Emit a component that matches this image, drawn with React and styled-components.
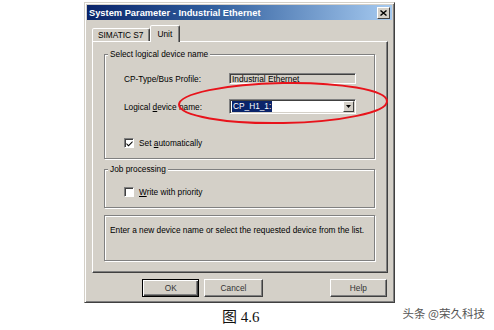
import React from 'react';
import styled, { createGlobalStyle } from 'styled-components';

const GlobalStyle = createGlobalStyle`
  html, body {
    margin: 0;
    background: #ffffff;
  }
`;

const face = '#d4d0c8';
const uiFont = `"Liberation Sans", Arial, sans-serif`;

const Page = styled.div`
  position: relative;
  width: 494px;
  height: 330px;
  overflow: hidden;
  background: #fff;
  font-family: ${uiFont};
  font-size: 8.3px;
  color: #000;
`;

const Window = styled.div`
  box-sizing: border-box;
  margin: 2px 0 0 84px;
  width: 311px;
  height: 301px;
  background: ${face};
  border: 1px solid;
  border-color: ${face} #404040 #404040 ${face};
  box-shadow: inset 1px 1px 0 #fff, inset -1px -1px 0 #808080;
  padding: 2px;
  display: flex;
  flex-direction: column;
`;

const TitleBar = styled.div`
  height: 15px;
  display: flex;
  align-items: center;
  padding: 0 2px;
  background: linear-gradient(90deg, #0a246a 0%, #2f5d9c 40%, #a6caf0 100%);
  color: #fff;
  font-weight: bold;
  font-size: 9.3px;
`;

const TitleText = styled.span`
  flex: 1;
  white-space: nowrap;
`;

const CloseButton = styled.div`
  box-sizing: border-box;
  width: 13px;
  height: 12px;
  background: ${face};
  border: 1px solid;
  border-color: #fff #404040 #404040 #fff;
  display: flex;
  align-items: center;
  justify-content: center;
`;

const Body = styled.div`
  flex: 1;
  display: flex;
  flex-direction: column;
  padding: 6px 4px 0 5px;
`;

const TabStrip = styled.div`
  display: flex;
  align-items: flex-end;
  height: 16px;
  position: relative;
  z-index: 1;
  margin-bottom: -1px;
`;

const Tab = styled.div`
  box-sizing: border-box;
  height: ${p => (p.$active ? '17px' : '13px')};
  margin-bottom: ${p => (p.$active ? '0' : '1px')};
  padding: 0 ${p => (p.$active ? '7px' : '5px')};
  display: flex;
  align-items: center;
  background: ${face};
  border: 1px solid;
  border-bottom: none;
  border-color: #fff #404040 transparent #fff;
  box-shadow: inset -1px 0 0 #808080;
  border-radius: 2px 2px 0 0;
  white-space: nowrap;
`;

const Panel = styled.div`
  box-sizing: border-box;
  height: 232px;
  border: 1px solid;
  border-color: #fff #404040 #404040 #fff;
  box-shadow: inset -1px -1px 0 #808080;
  padding: 7px 12px 0 11px;
  display: flex;
  flex-direction: column;
`;

const Group = styled.fieldset`
  margin: 0 0 ${p => p.$gap || 0}px 0;
  padding: ${p => p.$pad};
  border: 1px solid #808080;
  box-shadow: inset 1px 1px 0 #fff, 1px 1px 0 #fff;
  min-width: 0;
`;

const Legend = styled.legend`
  padding: 0 2px;
  margin-left: -16px;
  line-height: 10px;
  background: ${face};
`;

const InfoBox = styled.div`
  box-sizing: border-box;
  height: 46px;
  border: 1px solid #808080;
  box-shadow: inset 1px 1px 0 #fff, 1px 1px 0 #fff;
  padding: 9px 5px;
  line-height: 10px;
  white-space: nowrap;
`;

const FieldRow = styled.div`
  display: grid;
  grid-template-columns: 105px 127px;
  align-items: center;
  height: ${p => p.$h}px;
  margin-top: ${p => p.$mt || 0}px;
`;

const TextBox = styled.div`
  box-sizing: border-box;
  height: ${p => p.$h}px;
  border: 1px solid;
  border-color: #808080 #fff #fff #808080;
  box-shadow: inset 1px 1px 0 #404040, inset -1px -1px 0 ${face};
  background: ${p => (p.$disabled ? face : '#fff')};
  display: flex;
  align-items: center;
  padding: 0 2px 0 2px;
  white-space: nowrap;
  overflow: hidden;
`;

const Selected = styled.span`
  background: #0a246a;
  color: #fff;
  padding: 0 1px;
  line-height: 11px;
`;

const DropButton = styled.div`
  box-sizing: border-box;
  margin-left: auto;
  width: 11px;
  height: 11px;
  margin-right: -1px;
  background: ${face};
  border: 1px solid;
  border-color: #fff #404040 #404040 #fff;
  display: flex;
  align-items: center;
  justify-content: center;
`;

const CheckRow = styled.label`
  display: flex;
  align-items: center;
  gap: 5px;
  height: 10px;
  margin-top: ${p => p.$mt || 0}px;
`;

const Box = styled.span`
  box-sizing: border-box;
  width: 10px;
  height: 10px;
  background: #fff;
  border: 1px solid;
  border-color: #808080 #fff #fff #808080;
  box-shadow: inset 1px 1px 0 #404040;
  display: flex;
  align-items: center;
  justify-content: center;
`;

const Key = styled.span`
  text-decoration: underline;
`;

const ButtonRow = styled.div`
  display: flex;
  padding: 6px 1px 0 0;
`;

const Button = styled.div`
  box-sizing: border-box;
  width: ${p => p.$w}px;
  height: 18px;
  margin-left: ${p => p.$ml}px;
  display: flex;
  align-items: center;
  justify-content: center;
  background: ${face};
  border: 1px solid;
  border-color: ${p => (p.$default ? '#000' : '#fff #404040 #404040 #fff')};
  box-shadow: ${p =>
    p.$default
      ? 'inset 1px 1px 0 #fff, inset -1px -1px 0 #404040, inset -2px -2px 0 #808080'
      : 'inset -1px -1px 0 #808080'};
  color: #333;
`;

const Footer = styled.div`
  display: flex;
  align-items: flex-start;
`;

const Caption = styled.div`
  margin: 5px 0 0 222px;
  font-family: "Liberation Serif", "Noto Sans CJK SC", serif;
  font-size: 15px;
  line-height: 18px;
  color: #111;
`;

const Watermark = styled.div`
  margin: 2px 9px 0 auto;
  font-family: "Noto Sans CJK SC", sans-serif;
  font-size: 11.5px;
  line-height: 16px;
  color: #555;
`;

const Annotation = styled.svg`
  position: absolute;
  left: 0;
  top: 0;
  pointer-events: none;
`;

const Check = () => (
  <svg width="7" height="7" viewBox="0 0 7 7">
    <path d="M0.5 3 L2.5 5 L6.5 1 L6.5 2.6 L2.5 6.5 L0.5 4.5 Z" fill="#000" />
  </svg>
);

export default function App() {
  return (
    <Page>
      <GlobalStyle />
      <Window>
        <TitleBar>
          <TitleText>System Parameter - Industrial Ethernet</TitleText>
          <CloseButton>
            <svg width="7" height="6" viewBox="0 0 7 6">
              <path d="M0.5 0.5 L6.5 5.5 M6.5 0.5 L0.5 5.5" stroke="#000" strokeWidth="1.4" />
            </svg>
          </CloseButton>
        </TitleBar>
        <Body>
          <TabStrip>
            <Tab>SIMATIC S7</Tab>
            <Tab $active>Unit</Tab>
          </TabStrip>
          <Panel>
            <Group $pad="14px 0 10px 19px" $gap={5}>
              <Legend>Select logical device name</Legend>
              <FieldRow $h={11}>
                <span>CP-Type/Bus Profile:</span>
                <TextBox $h={11} $disabled>Industrial Ethernet</TextBox>
              </FieldRow>
              <FieldRow $h={15} $mt={15}>
                <span>Logical <Key>d</Key>evice name:</span>
                <TextBox $h={15}>
                  <Selected>CP_H1_1:</Selected>
                  <DropButton>
                    <svg width="5" height="3" viewBox="0 0 5 3">
                      <path d="M0 0 H5 L2.5 3 Z" fill="#000" />
                    </svg>
                  </DropButton>
                </TextBox>
              </FieldRow>
              <CheckRow $mt={24}>
                <Box><Check /></Box>
                <span>Set <Key>a</Key>utomatically</span>
              </CheckRow>
            </Group>
            <Group $pad="13px 0 10px 19px" $gap={7}>
              <Legend>Job processing</Legend>
              <CheckRow>
                <Box />
                <span><Key>W</Key>rite with priority</span>
              </CheckRow>
            </Group>
            <InfoBox>Enter a new device name or select the requested device from the list.</InfoBox>
          </Panel>
          <ButtonRow>
            <Button $w={58} $ml={50} $default>OK</Button>
            <Button $w={59} $ml={5}>Cancel</Button>
            <Button $w={58} $ml={67}>Help</Button>
          </ButtonRow>
        </Body>
      </Window>
      <Footer>
        <Caption>图 4.6</Caption>
        <Watermark>头条 @荣久科技</Watermark>
      </Footer>
      <Annotation width="494" height="330">
        <ellipse cx="283" cy="103" rx="104" ry="20" fill="none" stroke="#e8131b" strokeWidth="2" transform="rotate(-1 283 103)" />
      </Annotation>
    </Page>
  );
}
